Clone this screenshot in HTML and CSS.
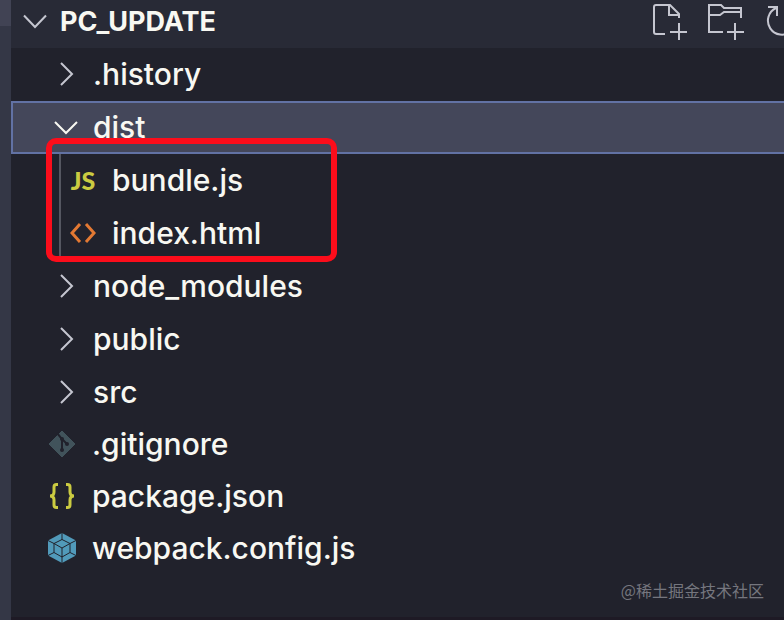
FILE: index.html
```html
<!DOCTYPE html>
<html lang="en">
<head>
    <meta charset="UTF-8">
    <meta name="viewport" content="width=device-width, initial-scale=1.0">
    <title>PC_UPDATE</title>
    <link rel="stylesheet" href="styles.css">
</head>
<body>
    <div class="activity-edge"></div>
    <main class="explorer">
        <header class="explorer-header">
            <button class="project" type="button" aria-expanded="true">
                <svg class="chevron" viewBox="0 0 26 26"><path d="M2 7.5 L13 19 L24 7.5"/></svg>
                <span>PC_UPDATE</span>
            </button>
            <div class="actions">
                <button type="button" aria-label="New File">
                    <svg viewBox="0 0 38 38"><path d="M15 34H6Q4 34 4 32V7Q4 5 6 5H20L29 14V18M19 5V15H29M29 23V40M20 32H37"/></svg>
                </button>
                <button type="button" aria-label="New Folder">
                    <svg viewBox="0 0 38 38"><path d="M17 32H3V5H15L18 8H35V18M3 15H14L18 12H35M29 23V40M21 32H38"/></svg>
                </button>
                <button type="button" aria-label="Refresh Explorer">
                    <svg viewBox="0 0 38 38"><path d="M6 7H15V16M14 8A14 14 0 1 0 29 10"/></svg>
                </button>
            </div>
        </header>

        <ul class="tree">
            <li>
                <button class="row" type="button" aria-expanded="false">
                    <svg class="chevron" viewBox="0 0 26 26"><path d="M8 2 L19 13 L8 24"/></svg>
                    <span>.history</span>
                </button>
            </li>
            <li>
                <button class="row selected" type="button" aria-expanded="true">
                    <svg class="chevron" viewBox="0 0 26 26"><path d="M2 8 L13 19 L24 8"/></svg>
                    <span>dist</span>
                </button>
                <ul class="children">
                    <li>
                        <a class="row" href="#bundle">
                            <span class="icon icon-js">JS</span>
                            <span>bundle.js</span>
                        </a>
                    </li>
                    <li>
                        <a class="row" href="#index">
                            <svg class="icon icon-html" viewBox="0 0 26 26"><path d="M10 4 L2 13 L10 22M16 4 L24 13 L16 22"/></svg>
                            <span>index.html</span>
                        </a>
                    </li>
                    <li class="highlight" aria-hidden="true"></li>
                </ul>
            </li>
            <li>
                <button class="row" type="button" aria-expanded="false">
                    <svg class="chevron" viewBox="0 0 26 26"><path d="M8 2 L19 13 L8 24"/></svg>
                    <span>node_modules</span>
                </button>
            </li>
            <li>
                <button class="row" type="button" aria-expanded="false">
                    <svg class="chevron" viewBox="0 0 26 26"><path d="M8 2 L19 13 L8 24"/></svg>
                    <span>public</span>
                </button>
            </li>
            <li>
                <button class="row" type="button" aria-expanded="false">
                    <svg class="chevron" viewBox="0 0 26 26"><path d="M8 2 L19 13 L8 24"/></svg>
                    <span>src</span>
                </button>
            </li>
            <li>
                <a class="row file" href="#gitignore">
                    <svg class="icon icon-git" viewBox="0 0 28 28">
                        <path class="git-body" d="M14 1 L27 14 L14 27 L1 14Z"/>
                        <path class="git-branch" d="M9 3 L14 9 V20M14 9 L19 14"/>
                        <circle cx="14" cy="9" r="2"/>
                        <circle cx="14" cy="20" r="2"/>
                        <circle cx="19" cy="14" r="2"/>
                    </svg>
                    <span>.gitignore</span>
                </a>
            </li>
            <li>
                <a class="row file" href="#package">
                    <svg class="icon icon-json" viewBox="0 0 28 28"><path d="M10 2.5H8.500Q6 2.500 6 5V10Q6 14 2 14Q6 14 6 18V23Q6 25.500 8.500 25.500H10M18 2.500H19.500Q22 2.500 22 5V10Q22 14 26 14Q22 14 22 18V23Q22 25.500 19.500 25.500H18"/></svg>
                    <span>package.json</span>
                </a>
            </li>
            <li>
                <a class="row file" href="#webpack">
                    <svg class="icon icon-webpack" viewBox="0 0 28 30">
                        <path class="cube" d="M14 0 L28 7.500 V22.500 L14 30 L0 22.500 V7.500Z"/>
                        <path class="edges" d="M14 0V7M0 7.500 L6 10.500M28 7.500 L22 10.500M0 22.500 L6 19.500M28 22.500 L22 19.500M14 23V30M14 6.500 L22 10.500 V19.500 L14 24 L6 19.500 V10.500ZM6 10.500 L14 15 L22 10.500M14 15V24"/>
                    </svg>
                    <span>webpack.config.js</span>
                </a>
            </li>
        </ul>
        <footer class="watermark" lang="zh">@稀土掘金技术社区</footer>
    </main>
</body>
</html>
```
FILE: styles.css
```css
* {
    box-sizing: border-box;
}

body {
    display: flex;
    min-height: 100vh;
    margin: 0;
    overflow: hidden;
    background-color: #21222c;
    color: #f8f8f2;
    font-family: Inter, "Liberation Sans", sans-serif;
    font-size: 30px;
    font-weight: 500;
}

button {
    padding: 0;
    border: 0;
    background: none;
    color: inherit;
    font: inherit;
}

svg {
    flex: none;
    fill: none;
}

ul {
    margin: 0;
    padding: 0;
    list-style: none;
}

.activity-edge {
    flex: 0 0 11px;
    background: linear-gradient(#414354 26px, #343746 26px);
}

.explorer {
    display: flex;
    flex: 1;
    flex-direction: column;
    min-width: 0;
    border-bottom: 3px solid #1e1a25;
}

.explorer-header {
    display: flex;
    justify-content: space-between;
    height: 48px;
    overflow: hidden;
    background-color: #282a36;
}

.project {
    display: flex;
    align-items: center;
    gap: 12px;
    padding: 0 0 6px 11px;
    font-size: 27px;
    font-weight: 700;
}

.chevron {
    width: 26px;
    height: 26px;
    stroke: #c5c6d0;
    stroke-width: 2;
}

.actions {
    display: flex;
    gap: 18px;
    margin-right: -16px;
}

.actions svg {
    display: block;
    width: 38px;
    height: 38px;
    overflow: visible;
    stroke: #c5c6d0;
    stroke-width: 2;
}

.actions button {
    height: 38px;
}

.row {
    display: flex;
    align-items: center;
    gap: 14px;
    width: 100%;
    height: 53px;
    padding: 0 0 2px 41px;
    border: 1px solid transparent;
    color: inherit;
    text-decoration: none;
    white-space: nowrap;
}

.row.file {
    gap: 16px;
    height: 52px;
    padding-left: 36px;
}

.row.selected {
    border: 2px solid #6272a4;
    border-right: 0;
    padding-left: 40px;
    background-color: #44475a;
}

.selected .chevron {
    stroke: #f8f8f2;
}

.children {
    position: relative;
    margin-left: 48px;
    border-left: 2px solid #555761;
}

.children .row {
    gap: 16px;
    padding-left: 8px;
}

/* red frame drawn over the build output */
.highlight {
    position: absolute;
    top: -16px;
    left: -15px;
    width: 291px;
    height: 124px;
    border: 6px solid #fc0d1b;
    border-radius: 10px;
}

.icon {
    flex: none;
    width: 28px;
    height: 28px;
}

.icon-js,
.icon-html {
    width: 26px;
    height: 26px;
}

.icon-js {
    color: #cbcb41;
    font-family: Lato, sans-serif;
    font-size: 25px;
    font-weight: 900;
    line-height: 26px;
    text-align: center;
}

.icon-html {
    stroke: #e37933;
    stroke-width: 3;
}

.git-body {
    fill: #41535b;
    stroke: #41535b;
    stroke-linejoin: round;
}

.git-branch {
    stroke: #21222c;
    stroke-width: 2;
}

.icon-git circle {
    fill: #21222c;
}

.icon-json {
    stroke: #cbcb41;
    stroke-width: 3;
}

.icon-webpack {
    height: 30px;
}

.cube {
    fill: #519aba;
}

.edges {
    stroke: #21222c;
    stroke-width: 1;
}

.watermark {
    margin-top: auto;
    padding: 0 20px 15px;
    color: #75767e;
    font-family: "Noto Sans CJK SC", sans-serif;
    font-size: 16px;
    font-weight: 400;
    line-height: 24px;
    text-align: right;
}
```
